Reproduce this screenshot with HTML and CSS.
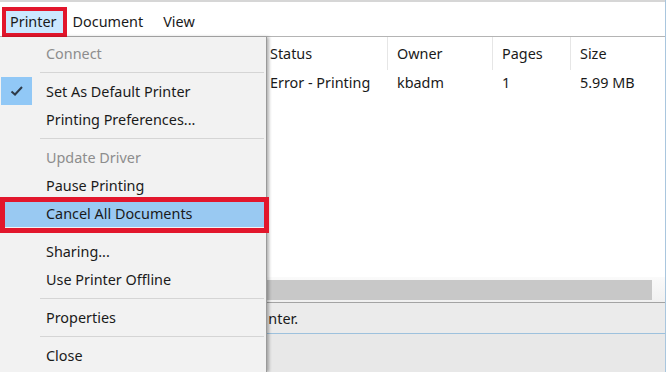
FILE: index.html
```html
<!DOCTYPE html>
<html lang="en">
<head>
    <meta charset="UTF-8">
    <meta name="viewport" content="width=device-width, initial-scale=1.0">
    <title>Print Queue</title>
    <link rel="stylesheet" href="styles.css">
</head>
<body>
    <div class="window">
        <div class="title-edge"></div>
        <div class="menubar">
            <span class="menu-title active">Printer</span>
            <span class="menu-title">Document</span>
            <span class="menu-title">View</span>
        </div>

        <div class="queue">
            <div class="queue-row queue-head">
                <div class="col col-name"></div>
                <div class="col col-status">Status</div>
                <div class="col col-owner">Owner</div>
                <div class="col col-pages">Pages</div>
                <div class="col col-size">Size</div>
            </div>
            <div class="queue-row">
                <div class="col col-name"></div>
                <div class="col col-status">Error - Printing</div>
                <div class="col col-owner">kbadm</div>
                <div class="col col-pages">1</div>
                <div class="col col-size">5.99 MB</div>
            </div>
        </div>

        <div class="hscroll">
            <div class="hscroll-thumb"></div>
        </div>

        <div class="statusbar">
            <span class="status-text">nter.</span>
        </div>
        <div class="bottom-area"></div>
    </div>

    <div class="dropdown">
        <div class="menu-item disabled"><span class="icon-cell"></span><span class="label">Connect</span></div>
        <div class="menu-sep"></div>
        <div class="menu-item">
            <span class="icon-cell checked">
                <svg width="14" height="12" viewBox="0 0 14 12"><path d="M1.5 6.5 L5 9.5 L12 2" fill="none" stroke="#2e3a48" stroke-width="2"/></svg>
            </span>
            <span class="label">Set As Default Printer</span>
        </div>
        <div class="menu-item"><span class="icon-cell"></span><span class="label">Printing Preferences...</span></div>
        <div class="menu-sep"></div>
        <div class="menu-item disabled"><span class="icon-cell"></span><span class="label">Update Driver</span></div>
        <div class="menu-item"><span class="icon-cell"></span><span class="label">Pause Printing</span></div>
        <div class="menu-item hot"><span class="icon-cell"></span><span class="label">Cancel All Documents</span></div>
        <div class="menu-sep"></div>
        <div class="menu-item"><span class="icon-cell"></span><span class="label">Sharing...</span></div>
        <div class="menu-item"><span class="icon-cell"></span><span class="label">Use Printer Offline</span></div>
        <div class="menu-sep"></div>
        <div class="menu-item"><span class="icon-cell"></span><span class="label">Properties</span></div>
        <div class="menu-sep"></div>
        <div class="menu-item"><span class="icon-cell"></span><span class="label">Close</span></div>

        <div class="callout"></div>
    </div>
</body>
</html>
```

FILE: styles.css
```css
body {
    margin: 0;
    width: 667px;
    height: 372px;
    overflow: hidden;
    position: relative;
    font-family: "Noto Sans", "Open Sans", sans-serif;
    font-size: 14.4px;
    color: #1a1a1a;
    background: #ffffff;
}

.window {
    width: 665px;
    height: 372px;
    border-right: 1px solid #a9c6de;
    display: flex;
    flex-direction: column;
}

.title-edge {
    height: 2px;
    background: #d6d6d6;
}

/* menu bar */
.menubar {
    height: 35px;
    box-sizing: border-box;
    padding-top: 5px;
    display: flex;
    background: #ffffff;
    border-bottom: 1px solid #b4b4b4;
}

.menu-title {
    height: 30px;
    line-height: 30px;
    padding: 0 10px;
    box-sizing: border-box;
}

.menu-title.active {
    margin-left: 2px;
    margin-right: -4px;
    padding: 0 6px 0 4px;
    line-height: 22px;
    background: #cce8ff;
    border: 4px solid #e2162c;
}

/* queue list */
.queue {
    height: 240px;
    background: #ffffff;
}

.queue-row {
    display: flex;
    height: 26px;
    line-height: 26px;
}

.queue-head {
    height: 33px;
    line-height: 33px;
}

.col {
    box-sizing: border-box;
    padding-left: 9px;
    white-space: nowrap;
    overflow: hidden;
}

.queue-head .col {
    border-right: 1px solid #e6e6e6;
}

.col-name { width: 261px; }
.col-status { width: 127px; }
.col-owner { width: 105px; }
.col-pages { width: 78px; }
.col-size { flex: 1; }

.queue-head .col-size {
    border-right: none;
}

/* horizontal scroll bar */
.hscroll {
    height: 25px;
    box-sizing: border-box;
    padding: 3px 13px 2px 20px;
    background: linear-gradient(#fafafa, #f0f0f0);
}

.hscroll-thumb {
    height: 20px;
    background: #c8c8c8;
}

/* status bar */
.statusbar {
    height: 32px;
    box-sizing: border-box;
    border-top: 1px solid #a3a3a3;
    border-bottom: 1px solid #9dc1dd;
    background: #ebebeb;
    display: flex;
    align-items: center;
}

.status-text {
    width: 298px;
    text-align: right;
    white-space: nowrap;
}

.bottom-area {
    flex: 1;
    background: #e8e8e8;
}

/* printer drop-down menu */
.dropdown {
    position: absolute;
    left: 0;
    top: 37px;
    width: 267px;
    height: 335px;
    padding-top: 2px;
    box-sizing: border-box;
    background: #f2f2f2;
    border-right: 1px solid #9a9a9a;
    box-shadow: 2px 0 3px rgba(0, 0, 0, 0.3);
}

.menu-item {
    display: flex;
    align-items: center;
    height: 28px;
    margin: 0 2px 0 1px;
}

.menu-item.disabled {
    color: #8d8d8d;
}

.menu-item.hot {
    background: #99c9f2;
}

.icon-cell {
    width: 31px;
    height: 28px;
    display: flex;
    align-items: center;
    justify-content: center;
}

.icon-cell.checked {
    background: #91c8f6;
}

.label {
    margin-left: 14px;
    white-space: nowrap;
}

.menu-sep {
    height: 10px;
    display: flex;
    align-items: center;
    padding-left: 40px;
    padding-right: 2px;
}

.menu-sep::after {
    content: "";
    flex: 1;
    height: 1px;
    background: #d5d5d5;
}

.callout {
    position: absolute;
    left: 0;
    top: 160px;
    width: 269px;
    height: 36px;
    box-sizing: border-box;
    border: 5px solid #e2162c;
}
```
